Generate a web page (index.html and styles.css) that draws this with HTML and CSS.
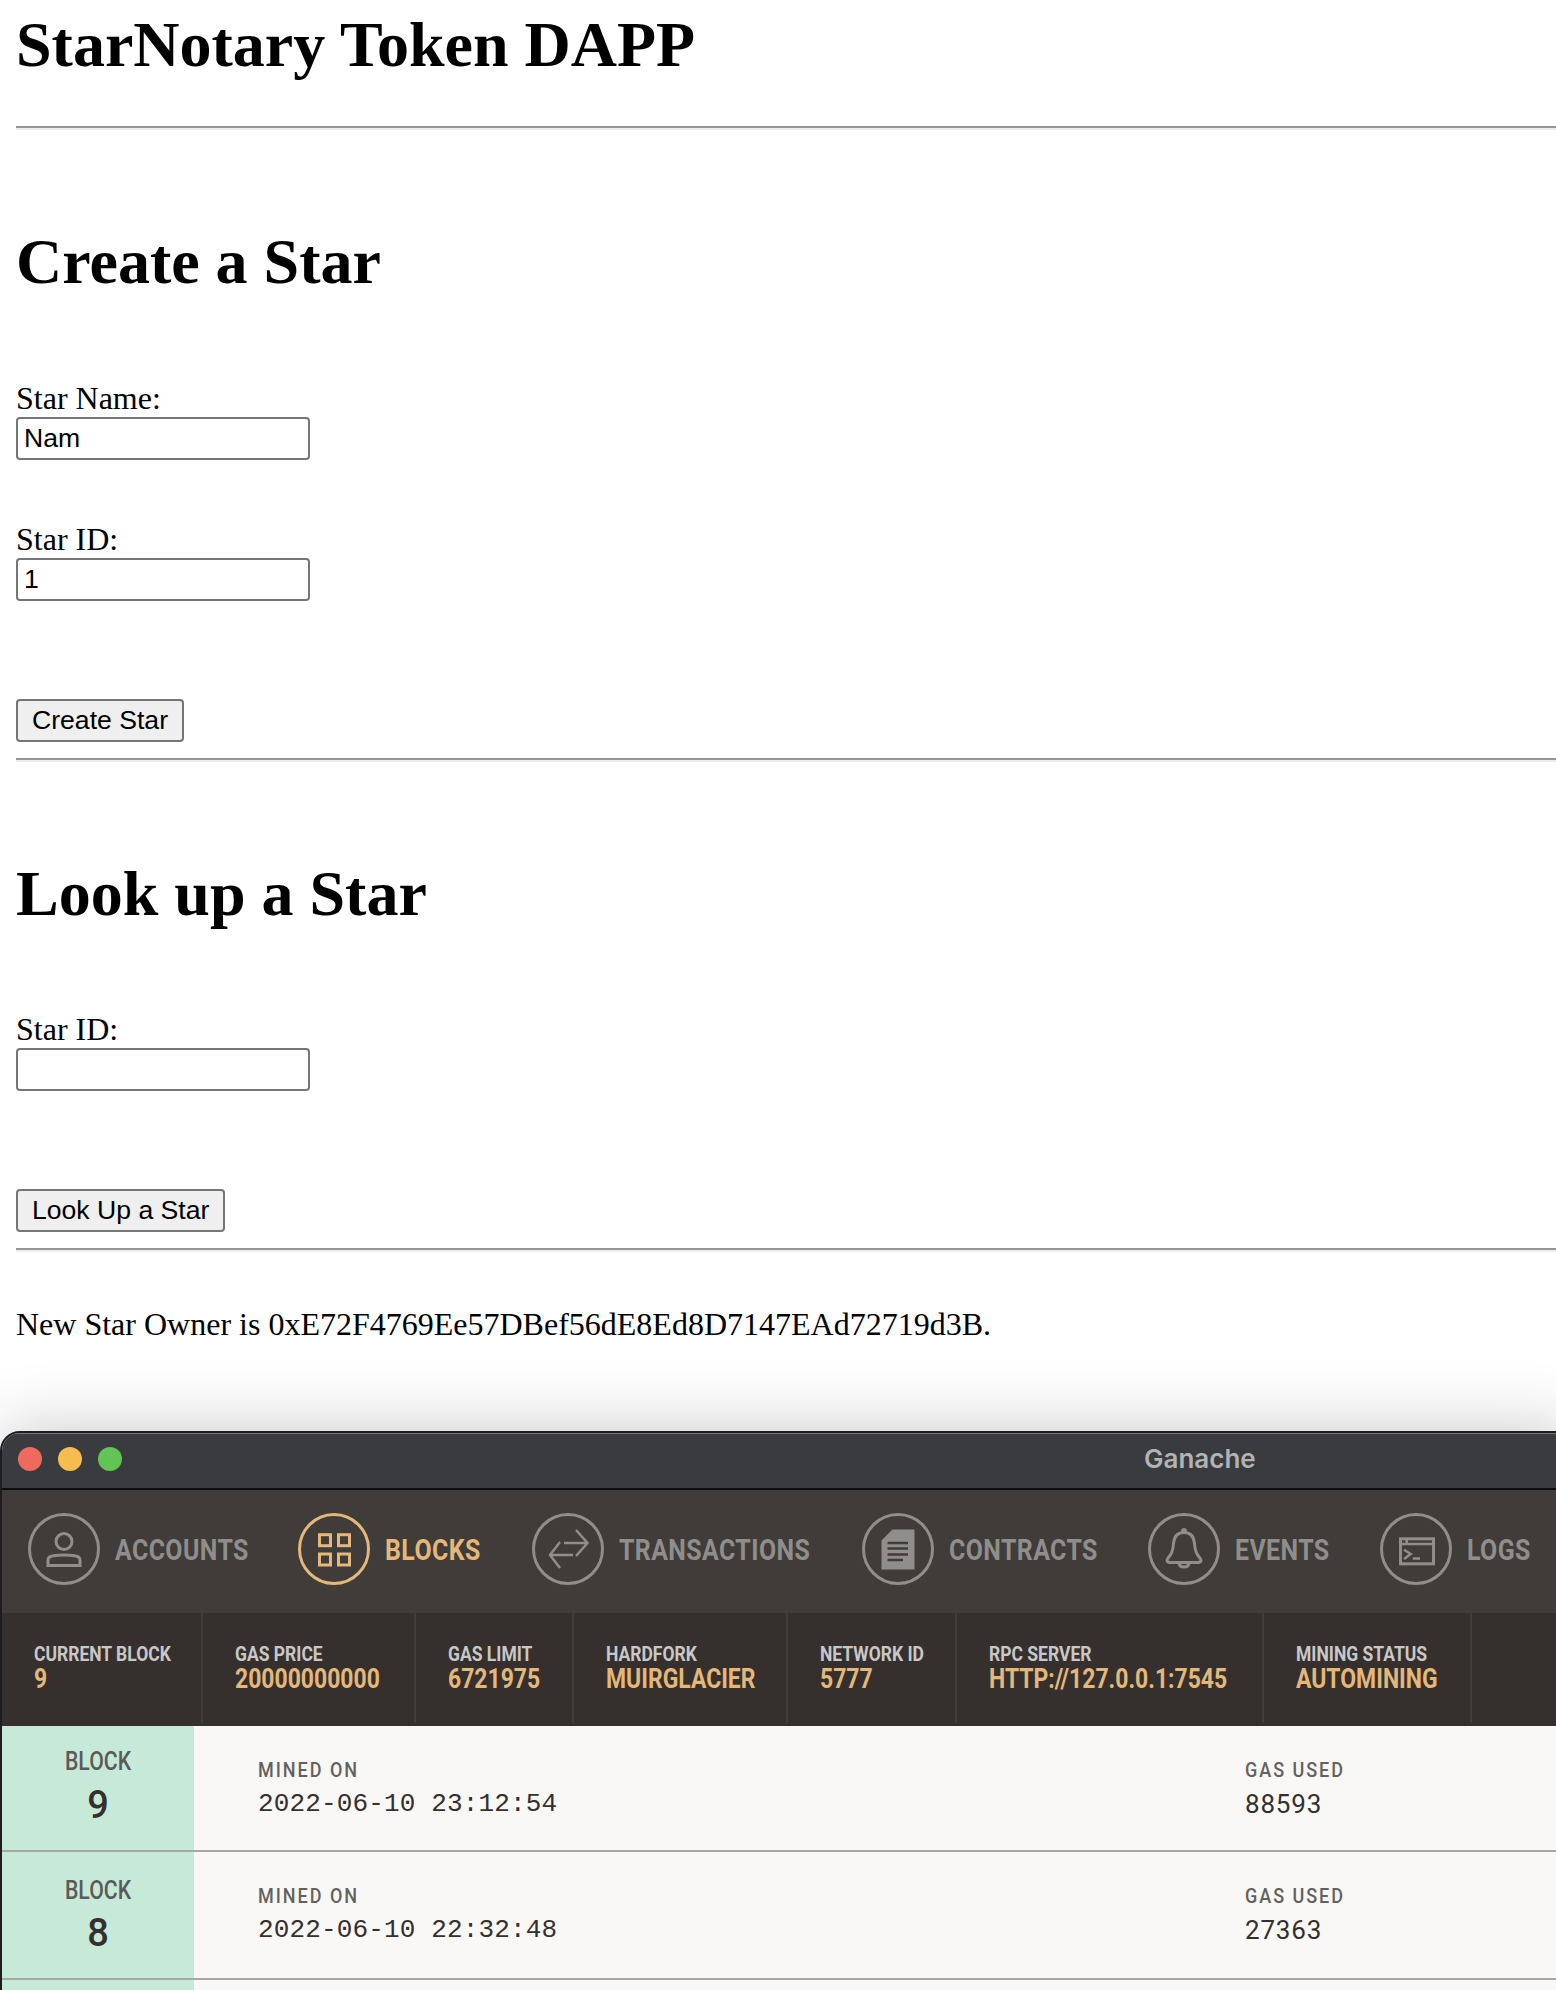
FILE: index.html
```html
<!DOCTYPE html>
<html lang="en">

<head>
    <meta charset="UTF-8">
    <meta name="viewport" content="width=device-width, initial-scale=1.0">
    <title>StarNotary Token DAPP</title>
    <link rel="stylesheet" href="styles.css">
</head>

<body>
    <div class="dapp">
        <h1>StarNotary Token DAPP</h1>
        <hr class="first-rule">

        <h1 class="section-title">Create a Star</h1>
        <label class="first-label" for="starName">Star Name:</label>
        <input id="starName" type="text" value="Nam">
        <label for="starId">Star ID:</label>
        <input id="starId" type="text" value="1">
        <button type="button">Create Star</button>
        <hr>

        <h1 class="section-title">Look up a Star</h1>
        <label class="first-label lookup-label" for="lookId">Star ID:</label>
        <input id="lookId" type="text">
        <button type="button">Look Up a Star</button>
        <hr>

        <p class="owner">New Star Owner is 0xE72F4769Ee57DBef56dE8Ed8D7147EAd72719d3B.</p>
    </div>

    <div class="window">
        <div class="titlebar">
            <div class="lights">
                <span class="light red"></span>
                <span class="light yellow"></span>
                <span class="light green"></span>
            </div>
            <div class="app-name">Ganache</div>
        </div>

        <nav class="tabs">
            <div class="tab">
                <svg class="tab-icon" viewBox="0 0 72 72">
                    <circle cx="36" cy="36" r="34.5" />
                    <circle cx="36" cy="28.5" r="8" />
                    <path d="M20 52.500v-5c0-2.500 1.500-4 4-4.500 4-.7 8-1 12-1s8 .3 12 1c2.500.5 4 2 4 4.500v5z" />
                </svg>
                <span class="tab-label">ACCOUNTS</span>
            </div>
            <div class="tab active">
                <svg class="tab-icon" viewBox="0 0 72 72">
                    <circle cx="36" cy="36" r="34.5" />
                    <rect x="21.500" y="21.700" width="11" height="11" />
                    <rect x="40.500" y="21.700" width="11" height="11" />
                    <rect x="21.500" y="41" width="11" height="11" />
                    <rect x="40.500" y="41" width="11" height="11" />
                </svg>
                <span class="tab-label">BLOCKS</span>
            </div>
            <div class="tab">
                <svg class="tab-icon" viewBox="0 0 72 72">
                    <circle cx="36" cy="36" r="34.5" />
                    <path class="thin" d="M32 30h23.500M44 17l11.500 13L44 43" />
                    <path class="thin" d="M41 42H18M28 29L18 42l10 13" />
                </svg>
                <span class="tab-label">TRANSACTIONS</span>
            </div>
            <div class="tab">
                <svg class="tab-icon" viewBox="0 0 72 72">
                    <circle cx="36" cy="36" r="34.5" />
                    <path class="filled" d="M31 18h20v37H21V28z" />
                    <path class="cutout" d="M25.500 30H46M25.500 35.500H46M25.500 41.500H46M25.500 47H41" />
                </svg>
                <span class="tab-label">CONTRACTS</span>
            </div>
            <div class="tab">
                <svg class="tab-icon" viewBox="0 0 72 72">
                    <circle cx="36" cy="36" r="34.5" />
                    <path d="M36 19.500c-7 0-10 5-10.500 11-.5 6-1 9-3.500 12-1.500 2-3 3-3 4.500 0 1.500 1 2.500 3 2.500h28c2 0 3-1 3-2.500 0-1.500-1.500-2.500-3-4.500-2.500-3-3-6-3.500-12-.5-6-3.500-11-10.500-11z" />
                    <path d="M31 49.500c0 3 2 4.500 5 4.500s5-1.500 5-4.500" />
                    <circle class="nub" cx="36" cy="18" r="1.500" />
                </svg>
                <span class="tab-label">EVENTS</span>
            </div>
            <div class="tab">
                <svg class="tab-icon" viewBox="0 0 72 72">
                    <circle cx="36" cy="36" r="34.5" />
                    <rect x="20.500" y="25.800" width="33" height="25" />
                    <path class="thin" d="M20.500 31h33M26.700 25.800V31M24 36.700l6.700 4.300-6.700 5M32.700 45.500H40" />
                </svg>
                <span class="tab-label">LOGS</span>
            </div>
        </nav>

        <div class="stats">
            <div class="stat">
                <div class="stat-label">CURRENT BLOCK</div>
                <div class="stat-value">9</div>
            </div>
            <div class="stat">
                <div class="stat-label">GAS PRICE</div>
                <div class="stat-value">20000000000</div>
            </div>
            <div class="stat">
                <div class="stat-label">GAS LIMIT</div>
                <div class="stat-value">6721975</div>
            </div>
            <div class="stat">
                <div class="stat-label">HARDFORK</div>
                <div class="stat-value">MUIRGLACIER</div>
            </div>
            <div class="stat">
                <div class="stat-label">NETWORK ID</div>
                <div class="stat-value">5777</div>
            </div>
            <div class="stat">
                <div class="stat-label">RPC SERVER</div>
                <div class="stat-value">HTTP://127.0.0.1:7545</div>
            </div>
            <div class="stat">
                <div class="stat-label">MINING STATUS</div>
                <div class="stat-value">AUTOMINING</div>
            </div>
        </div>

        <div class="block-row first-row">
            <div class="block-num">
                <div class="block-word">BLOCK</div>
                <div class="block-digit">9</div>
            </div>
            <div class="block-col mined">
                <div class="col-label">MINED ON</div>
                <div class="col-date">2022-06-10 23:12:54</div>
            </div>
            <div class="block-col">
                <div class="col-label">GAS USED</div>
                <div class="col-gas">88593</div>
            </div>
        </div>
        <div class="block-row">
            <div class="block-num">
                <div class="block-word">BLOCK</div>
                <div class="block-digit">8</div>
            </div>
            <div class="block-col mined">
                <div class="col-label">MINED ON</div>
                <div class="col-date">2022-06-10 22:32:48</div>
            </div>
            <div class="block-col">
                <div class="col-label">GAS USED</div>
                <div class="col-gas">27363</div>
            </div>
        </div>
        <div class="block-row">
            <div class="block-num"></div>
        </div>
    </div>
</body></html>
```

FILE: styles.css
```css
html, body {
    margin: 0;
    height: 1990px;
    overflow: hidden;
    background: #fff;
}

body {
    font-family: "Liberation Serif", serif;
    font-size: 32px;
    color: #000;
}

.dapp {
    padding: 8px 0 0 16px;
}

h1 {
    margin: 0;
    font-size: 64px;
    line-height: 74px;
    font-weight: bold;
}

hr {
    margin: 16px 0 0;
    height: 0;
    border: 0;
    border-top: 2px solid #959595;
    border-bottom: 2px solid #eee;
}

.first-rule {
    margin-top: 44px;
}

.section-title {
    margin-top: 95px;
}

label {
    display: block;
    margin-top: 61px;
    line-height: 37px;
}

.first-label {
    margin-top: 81px;
}

.lookup-label {
    margin-top: 80px;
}

input {
    display: block;
    box-sizing: border-box;
    width: 294px;
    height: 43px;
    padding: 0 6px;
    border: 2px solid #767676;
    border-radius: 4px;
    font-family: "Liberation Sans", sans-serif;
    font-size: 26.6px;
    color: #000;
    background: #fff;
}

button {
    display: block;
    box-sizing: border-box;
    height: 43px;
    margin-top: 98px;
    padding: 0 14px;
    border: 2px solid #767676;
    border-radius: 4px;
    font-family: "Liberation Sans", sans-serif;
    font-size: 26.6px;
    color: #000;
    background: #efefef;
}

.owner {
    margin: 54px 0 0;
    line-height: 37px;
}

/* ganache window */
.window {
    margin: 88px -20px 0 0;
    border: 2px solid #1d1d1f;
    border-radius: 20px 0 0 0;
    background: #f9f8f6;
    box-shadow: 0 0 70px rgba(0, 0, 0, 0.22);
    overflow: hidden;
}

.titlebar {
    display: flex;
    align-items: center;
    box-sizing: border-box;
    height: 57px;
    padding-bottom: 4px;
    border-top: 1px solid #77787a;
    border-bottom: 2px solid #0e0e0e;
    background: #3a3b3e;
}

.lights {
    display: flex;
    gap: 16px;
    padding-left: 16px;
}

.light {
    width: 24px;
    height: 24px;
    border-radius: 50%;
}

.red {
    background: #ee6a5f;
}

.yellow {
    background: #f5bd4f;
}

.green {
    background: #61c454;
}

.app-name {
    margin: 0 0 2px 1022px;
    font-family: Inter, "Liberation Sans", sans-serif;
    font-size: 26px;
    font-weight: 600;
    color: #b2b3b5;
}

.tabs {
    display: grid;
    grid-template-columns: 270px 234px 330px 286px 232px 1fr;
    align-items: center;
    box-sizing: border-box;
    height: 123px;
    padding: 0 0 5px 26px;
    background: #403c39;
}

.tab {
    display: flex;
    align-items: center;
    gap: 15px;
    color: #8f8e8c;
}

.tab.active {
    color: #e4b77a;
}

.tab-icon {
    flex: none;
    width: 72px;
    height: 72px;
    fill: none;
    stroke: currentColor;
    stroke-width: 3;
}

.tab-icon .thin {
    stroke-width: 2.5;
}

.tab-icon .filled,
.tab-icon .nub {
    fill: currentColor;
}

.tab-icon .cutout {
    stroke: #403c39;
    stroke-width: 2.5;
}

/* no condensed face installed, so the roboto labels are squeezed */
.tab-label {
    font-family: Roboto, sans-serif;
    font-size: 30px;
    font-weight: bold;
    letter-spacing: 0.5px;
    white-space: nowrap;
    transform: scaleX(0.83);
    transform-origin: left;
}

.stats {
    display: grid;
    grid-template-columns: 201px 213px 158px 214px 169px 307px 208px 1fr;
    height: 110px;
    padding-bottom: 3px;
    background: #35302d;
}

.stat {
    padding: 29px 0 0 32px;
    border-right: 2px solid #413d3a;
    font-family: Roboto, sans-serif;
    font-weight: bold;
    white-space: nowrap;
}

.stat-label {
    font-size: 20px;
    line-height: 24px;
    color: #c8c8c8;
    transform: scaleX(0.875);
    transform-origin: left;
}

.stat-value {
    font-size: 27px;
    line-height: 26px;
    color: #e4b77a;
    transform: scaleX(0.85);
    transform-origin: left;
}

.block-row {
    display: flex;
    height: 126px;
    border-bottom: 2px solid #a9a7a3;
}

.first-row {
    height: 124px;
}

.block-num {
    width: 192px;
    padding-top: 24px;
    background: #c6ead7;
    text-align: center;
}

.first-row .block-num {
    padding-top: 21px;
}

.block-word {
    font-family: Roboto, sans-serif;
    font-size: 25px;
    line-height: 30px;
    font-weight: 500;
    color: #5c5a58;
    transform: scaleX(0.85);
}

.block-digit {
    margin-top: 5px;
    font-family: Roboto, sans-serif;
    font-size: 38px;
    line-height: 44px;
    font-weight: 500;
    color: #33302e;
}

.first-row .block-digit {
    margin-top: 6px;
}

.block-col {
    padding-top: 32px;
}

.mined {
    width: 1051px;
    padding-left: 64px;
    box-sizing: border-box;
}

.col-label {
    font-family: Roboto, sans-serif;
    font-size: 20px;
    line-height: 24px;
    font-weight: 500;
    letter-spacing: 2.2px;
    color: #63615f;
    white-space: nowrap;
    transform: scaleX(0.9);
    transform-origin: left;
}

.col-date {
    margin-top: 7px;
    font-family: "Liberation Mono", monospace;
    font-size: 26px;
    line-height: 30px;
    letter-spacing: 0.15px;
    color: #33302e;
}

.col-gas {
    margin-top: 7px;
    font-family: Roboto, sans-serif;
    font-size: 26px;
    line-height: 30px;
    letter-spacing: 0.8px;
    color: #33302e;
}
```
